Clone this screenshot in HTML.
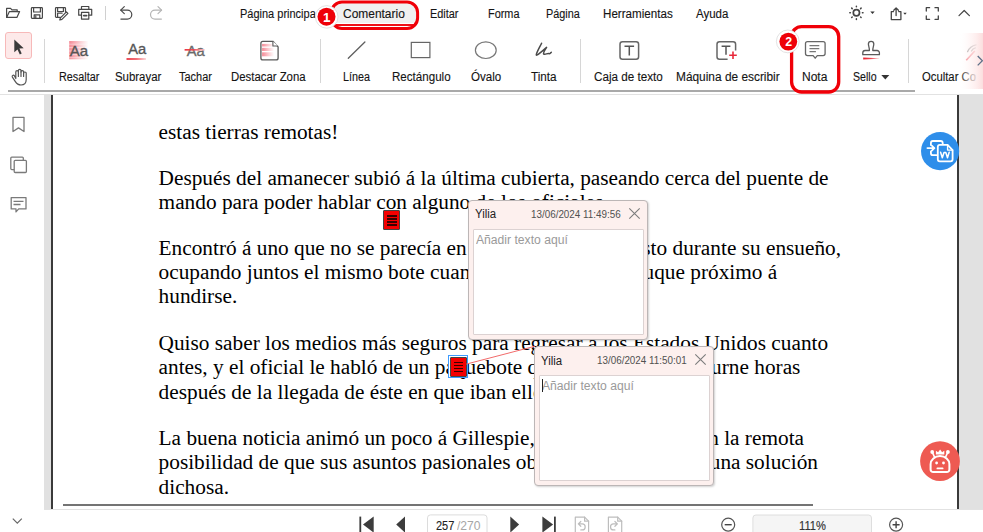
<!DOCTYPE html>
<html><head><meta charset="utf-8">
<style>
html,body{margin:0;padding:0;}
body{width:983px;height:532px;position:relative;overflow:hidden;background:#fff;font-family:"Liberation Sans",sans-serif;font-size:12px;color:#1a1a1a;}
.abs{position:absolute;}
svg{position:absolute;overflow:visible;}
.t{position:absolute;font-size:12px;line-height:14px;white-space:nowrap;color:#141414;transform-origin:0 0;-webkit-text-stroke:.12px #141414;}
.sep{position:absolute;width:1px;background:#d6d6d6;top:39px;height:44px;}
.doc{position:absolute;font-family:"Liberation Serif",serif;font-size:21.3px;color:#000;white-space:nowrap;left:158.6px;line-height:24px;}
.docr{left:auto;}
.pop{position:absolute;width:177.600px;height:137.800px;background:#fdf0ee;border:1px solid #bcb6b6;border-radius:4px;box-shadow:1px 1px 2px rgba(0,0,0,.18);}
.pop .ta{position:absolute;left:4px;top:28px;width:168.600px;height:104.200px;background:#fff;border:1px solid #dcd2d2;border-radius:1px;}
.pop .nm{position:absolute;left:5.500px;top:6.700px;font-size:12px;color:#222;transform:scaleX(.949);transform-origin:0 0;}
.pop .dt{position:absolute;top:8px;font-size:10px;color:#505050;white-space:nowrap;transform-origin:0 0;}
.pop .ph{position:absolute;left:6.600px;top:32.100px;font-size:12px;transform:scaleX(1.0117);color:#9a9a9a;white-space:nowrap;transform-origin:0 0;}
.note{position:absolute;width:15px;height:18px;background:#f40000;border:1px solid #444;border-radius:1px;}
.note i{position:absolute;left:2.800px;width:9.400px;height:1.300px;background:#3a0000;}
</style></head><body>


<div class="abs" style="left:44px;top:95px;width:7px;height:414px;background:#e1e1e1;"></div>
<div class="abs" style="left:51px;top:95px;width:2px;height:414px;background:#3a3a3a;"></div>
<div class="abs" style="left:957px;top:95px;width:2px;height:414px;background:#3a3a3a;"></div>
<div class="abs" style="left:959px;top:95px;width:24px;height:414px;background:#e1e1e1;"></div>
<div class="abs" style="left:63px;top:504px;width:750px;height:2px;background:#747474;"></div>

<div class="doc" style="top:120px;">estas tierras remotas!</div>
<div class="doc" style="top:166px;">Después del amanecer subió á la última cubierta, paseando cerca del puente de</div>
<div class="doc" style="top:190px;">mando para poder hablar con alguno de los oficiales.</div>
<div class="doc" style="top:236px;">Encontró á uno que no se parecía en nada al que había visto durante su ensueño,</div>
<div class="doc" style="top:260px;">ocupando juntos el mismo bote cuando abandonaron el buque próximo á</div>
<div class="doc" style="top:284px;">hundirse.</div>
<div class="doc" style="top:331px;">Quiso saber los medios más seguros para regresar á los Estados Unidos cuanto</div>
<div class="doc" style="top:355px;">antes, y el oficial le habló de un paquebote q</div>
<div class="doc docr" style="top:355px;right:182.6px;">nocturne horas</div>
<div class="doc" style="top:380px;">después de la llegada de éste en que iban ellos.</div>
<div class="doc" style="top:426px;">La buena noticia animó un poco á Gillespie,</div>
<div class="doc docr" style="top:426px;right:179.0px;">en la remota</div>
<div class="doc" style="top:450px;">posibilidad de que sus asuntos pasionales ob</div>
<div class="doc docr" style="top:450px;right:165.0px;">una solución</div>
<div class="doc" style="top:475px;">dichosa.</div>

<svg style="left:915px;top:126px" width="50" height="50" viewBox="915 126 50 50">
 <circle cx="940.100" cy="151.100" r="19.100" fill="#2e8eea"/>
 <g fill="none" stroke="#fff" stroke-width="1.800" stroke-linejoin="round" stroke-linecap="round">
  <path d="M930.900 145v-2a2 2 0 0 1 2-2h7.800a2 2 0 0 1 2 2v1"/>
  <path d="M930.900 151.300v1.900a2 2 0 0 0 2 2h3.500"/>
  <path d="M927.400 148.100h6.800M931.800 145.600l2.600 2.500l-2.600 2.500"/>
  <path d="M939.800 144.900h7.800l5 5.200v9.200a2 2 0 0 1-2 2h-10.800a2 2 0 0 1-2-2v-12.400a2 2 0 0 1 2-2z" fill="#2e8eea"/>
  <path d="M947.600 144.900v5.200h5" stroke-width="1.400"/>
 </g>
 <path d="M940.600 152.200l1.700 5.600l1.700-5.200h1.800l1.700 5.200l1.700-5.600" fill="none" stroke="#fff" stroke-width="1.500" stroke-linejoin="round" stroke-linecap="round"/>
</svg>
<svg style="left:915px;top:436px" width="50" height="50" viewBox="915 436 50 50">
 <circle cx="940" cy="461.050" r="19.900" fill="#ee5a52"/>
 <g fill="none" stroke="#fff" stroke-width="2" stroke-linejoin="round" stroke-linecap="round">
  <path d="M930.600 469.500v-5.200a9.400 8.200 0 0 1 18.800 0v5.200a2.600 2.600 0 0 1-2.600 2.600h-13.600a2.600 2.600 0 0 1-2.600-2.600z"/>
  <path d="M932.500 452.600l1.800 4M947.600 452.600l-1.800 4" stroke-width="1.600"/>
  <path d="M937.400 468.400h5.200" stroke-width="1.800"/>
 </g>
 <circle cx="932.200" cy="452" r="1.900" fill="#fff"/><circle cx="947.900" cy="452" r="1.900" fill="#fff"/>
 <circle cx="936.600" cy="463" r="1.400" fill="#fff"/><circle cx="943.500" cy="463" r="1.400" fill="#fff"/>
 <path d="M935.900 454.400v-3.600l2.200 1.400l2-2.600l2 2.600l2.200-1.400v3.600z" fill="#fff"/>
</svg>


<div class="abs" style="left:0;top:95px;width:44px;height:437px;background:#fff;"></div>
<svg style="left:0;top:95px" width="44" height="140" viewBox="0 95 44 140" fill="none" stroke="#7a7a7a" stroke-width="1.300" stroke-linejoin="round">
 <path d="M13 117.300h11v14.200l-5.500-3.600l-5.500 3.600z"/>
 <path d="M14.200 169.600h-2.400a1 1 0 0 1-1-1v-10.500a1 1 0 0 1 1-1h10.500a1 1 0 0 1 1 1v2.200"/>
 <rect x="14.200" y="160.300" width="12.200" height="12.200" rx="1"/>
 <path d="M11.200 197.600h14.800v11.300h-7.300l-2.700 3l0-3h-4.800z"/>
 <path d="M13.500 201.300h10M13.500 204.500h7"/>
</svg>


<div class="abs" style="left:0;top:0;width:983px;height:94px;background:#fff;"></div>
<div class="abs" style="left:8px;top:90px;width:907px;height:2px;background:#a9a9a9;"></div>
<div class="abs" style="left:0;top:94px;width:983px;height:1px;background:#e2e2e2;"></div>

<div class="abs" style="left:333px;top:3px;width:83px;height:20px;background:#f0f0f0;border-radius:8px 8px 3px 3px;"></div>
<div class="abs" style="left:335.500px;top:24.400px;width:78.200px;height:1.500px;background:#ee1018;"></div>
<div class="t" style="left:239.7px;top:7px;transform:scaleX(0.9162);">Página principa</div>
<div class="t" style="left:343.2px;top:7px;transform:scaleX(0.9963);">Comentario</div>
<div class="t" style="left:429.6px;top:7px;transform:scaleX(0.9088);">Editar</div>
<div class="t" style="left:487.9px;top:7px;transform:scaleX(0.9086);">Forma</div>
<div class="t" style="left:545.5px;top:7px;transform:scaleX(0.9042);">Página</div>
<div class="t" style="left:602.7px;top:7px;transform:scaleX(0.9677);">Herramientas</div>
<div class="t" style="left:695.8px;top:7px;transform:scaleX(0.9583);">Ayuda</div>
<div class="t" style="left:59.2px;top:70px;transform:scaleX(0.9018);">Resaltar</div>
<div class="t" style="left:114.5px;top:70px;transform:scaleX(0.9507);">Subrayar</div>
<div class="t" style="left:179.1px;top:70px;transform:scaleX(0.9131);">Tachar</div>
<div class="t" style="left:231.4px;top:70px;transform:scaleX(0.9479);">Destacar Zona</div>
<div class="t" style="left:343px;top:70px;transform:scaleX(0.8991);">Línea</div>
<div class="t" style="left:391.9px;top:70px;transform:scaleX(0.9651);">Rectángulo</div>
<div class="t" style="left:470.7px;top:70px;transform:scaleX(0.9630);">Óvalo</div>
<div class="t" style="left:531.1px;top:70px;transform:scaleX(0.9760);">Tinta</div>
<div class="t" style="left:594.2px;top:70px;transform:scaleX(0.9729);">Caja de texto</div>
<div class="t" style="left:676px;top:70px;transform:scaleX(0.9903);">Máquina de escribir</div>
<div class="t" style="left:802px;top:70px;transform:scaleX(1.0016);">Nota</div>
<div class="t" style="left:853.4px;top:70px;transform:scaleX(0.8842);">Sello</div>
<div class="t" style="left:921.9px;top:70px;transform:scaleX(.9414)">Ocultar Co</div>
<svg style="left:881px;top:75px" width="9" height="5"><path d="M0.3 0h8L4.300 4.600z" fill="#333"/></svg>
<div class="sep" style="left:44px;"></div>
<div class="sep" style="left:320px;"></div>
<div class="sep" style="left:580px;"></div>
<div class="sep" style="left:908px;"></div>
<div class="abs" style="left:105px;top:6px;width:1px;height:14px;background:#d0d0d0;"></div>

<svg style="left:0;top:0" width="170" height="30" viewBox="0 0 170 30" fill="none" stroke="#484848" stroke-width="1.200" stroke-linejoin="round" stroke-linecap="round">
 <!-- folder -->
 <path d="M6.600 17.400v-9h4l1.300 1.400h5.300v1.800"/><path d="M6.600 17.400l2.800-5.800h10.200l-2.700 5.800z"/>
 <!-- save -->
 <rect x="31.400" y="7.600" width="11" height="10.800" rx=".8"/><path d="M33.600 7.600v4.400h6.800v-4.400M34.200 18.400v-3.600h5.600v3.600M35.800 16.200v2"/>
 <!-- save edit -->
 <path d="M60.500 17.300h-4.200a.8.800 0 0 1-.8-.8v-8.100a.8.800 0 0 1 .8-.8h8.400a.8.800 0 0 1 .8.800v3.600"/><path d="M57.600 7.600v3.900h5.800v-3.900M57.600 17.300v-4.200h4.600"/>
 <path d="M66.400 11.900l1.500 1.500l-6 6l-2.100.6l.6-2.100z"/>
 <!-- print -->
 <path d="M81.500 9.300v-2.800h7.300v2.800"/><path d="M81.500 15.200h-2.800v-5.900h13v5.900h-2.900"/><rect x="81.500" y="12.300" width="7.300" height="6.800"/><path d="M83.800 15.600h2.800" stroke-width="1.800"/>
 <!-- undo -->
 <path d="M124.300 6.600l-3.600 3.500l3.600 3.500"/><path d="M120.900 10.100h6.400a4.500 4.500 0 0 1 0 9h-6.400"/>
 <g stroke="#b4b4b4"><path d="M158 6.600l3.600 3.500l-3.600 3.500"/><path d="M161.400 10.100h-6.400a4.500 4.500 0 0 0 0 9h6.400"/></g>
</svg>


<svg style="left:840px;top:0" width="143" height="30" viewBox="840 0 143 30" fill="none" stroke="#444" stroke-width="1.300" stroke-linecap="round" stroke-linejoin="round">
 <circle cx="856.400" cy="12.800" r="3.100" stroke-width="1.700"/>
 <g stroke-width="1.500"><path d="M856.400 6.200v.6M856.400 18.800v.6M849.800 12.800h.6M862.400 12.800h.6M851.700 8.100l.5.500M860.600 17l.5.500M851.700 17.500l.5-.5M860.600 8.600l.5-.5"/></g>
 <path d="M870.300 11.600h4.400l-2.200 2.500z" fill="#333" stroke="none"/>
 <path d="M893.500 11.600h-2.200v8h9.600v-8h-2.200M896.100 15.500v-7.200M893.800 10.300l2.300-2.400l2.300 2.400"/>
 <path d="M903.300 12.800h3.400l-1.700 1.900z" fill="#333" stroke="none"/>
 <path d="M926.300 11v-3.300h3.300M935 7.700h3.300v3.300M938.300 16v3.300h-3.300M929.600 19.300h-3.300v-3.300"/>
 <path d="M959 15.700l5.200-5.200l5.200 5.200" stroke-width="1.200"/>
</svg>


<div class="abs" style="left:5.2px;top:32.3px;width:24.6px;height:24.6px;background:#fde9e9;border:1px solid #f7b9b9;border-radius:3px;"></div>
<svg style="left:0;top:30px" width="44" height="60" viewBox="0 30 44 60">
 <path d="M14.300 39.500v12.800l3.200-2.900l2.300 5l1.900-.9l-2.300-4.900l4.300-.3z" fill="#3a3a3a"/>
 <g fill="none" stroke="#555" stroke-width="1.200" stroke-linejoin="round" stroke-linecap="round">
  <path d="M15.800 78.500v-6.600a1.300 1.300 0 0 1 2.600 0v-1.300a1.300 1.300 0 0 1 2.600 0v1.300a1.300 1.300 0 0 1 2.600 0v1.400a1.300 1.300 0 0 1 2.600 0v6.200c0 3.300-2 5.500-5.200 5.500c-3 0-4.300-1.200-5.800-3.600l-2.800-4.300c-.8-1.400 1-2.500 2-1.400z"/>
  <path d="M18.400 71.900v4.600M21 71.900v4.600M23.600 73.300v3.200"/>
 </g>
</svg>


<svg style="left:44px;top:30px" width="939" height="60" viewBox="44 30 939 60">
 <defs>
  <linearGradient id="pk" x1="0" x2="1" y1="0" y2="0"><stop offset="0" stop-color="#f58a96"/><stop offset=".55" stop-color="#fbcdd2"/><stop offset="1" stop-color="#fff"/></linearGradient>
  <linearGradient id="rd" x1="0" x2="1" y1="0" y2="0"><stop offset="0" stop-color="#e8202c"/><stop offset=".5" stop-color="#ee4a55"/><stop offset="1" stop-color="#fbd0d3"/></linearGradient>
  <linearGradient id="fade" x1="0" x2="1" y1="0" y2="0"><stop offset="0" stop-color="#fff" stop-opacity="0"/><stop offset=".4" stop-color="#fff4f4" stop-opacity=".6"/><stop offset=".75" stop-color="#fdeaea" stop-opacity=".9"/><stop offset="1" stop-color="#fbdede"/></linearGradient>
 </defs>
 <!-- Resaltar -->
 <rect x="69.200" y="41" width="19.300" height="18.300" fill="url(#pk)"/>
 <g stroke="#fff" stroke-opacity=".55" stroke-width=".8"><path d="M69 44.200h20M69 47.600h20M69 51h20M69 54.400h20M69 57.700h20"/></g>
 <text x="69.800" y="55.600" font-family="Liberation Sans" font-size="15.2" fill="#565656" stroke="#565656" stroke-width=".35" textLength="18.400" lengthAdjust="spacingAndGlyphs">Aa</text>
 <!-- Subrayar -->
 <text x="128.200" y="53.800" font-family="Liberation Sans" font-size="15.2" fill="#565656" stroke="#565656" stroke-width=".35" textLength="18" lengthAdjust="spacingAndGlyphs">Aa</text>
 <rect x="126.500" y="58.200" width="19.500" height="1.600" fill="url(#rd)"/>
 <!-- Tachar -->
 <text x="186.800" y="55.600" font-family="Liberation Sans" font-size="15.2" fill="#6a6a6a" stroke="#6a6a6a" stroke-width=".35" textLength="18" lengthAdjust="spacingAndGlyphs">Aa</text>
 <rect x="184.600" y="49.100" width="20.200" height="1.500" fill="url(#rd)"/>
 <!-- Destacar zona -->
 <rect x="262.100" y="43.900" width="12" height="2.600" fill="url(#pk)"/>
 <rect x="262.100" y="47.800" width="12" height="3.200" fill="url(#pk)"/>
 <rect x="262.100" y="52.300" width="12" height="4" fill="url(#pk)"/>
 <path d="M272.900 41.300h-10a2 2 0 0 0-2 2v14.600a2 2 0 0 0 2 2h13.200a2 2 0 0 0 2-2v-11z" fill="none" stroke="#5a5a5a" stroke-width="1.300" stroke-linejoin="round"/>
 <path d="M272.900 41.300v4.700h5.200" fill="#fff" stroke="#5a5a5a" stroke-width="1.100" stroke-linejoin="round"/>
 <!-- Linea -->
 <path d="M348.300 58.300l16.600-16.300" stroke="#5f5f5f" stroke-width="1.300" stroke-linecap="round"/>
 <!-- Rect -->
 <rect x="411.300" y="42.400" width="18.600" height="15.200" fill="none" stroke="#666" stroke-width="1.200"/>
 <!-- Oval -->
 <ellipse cx="485.800" cy="50.200" rx="10.400" ry="8.300" fill="none" stroke="#777" stroke-width="1.200"/>
 <!-- Tinta -->
 <path d="M541.600 43.200C539.800 47 536.500 52.500 536.300 54.800C536.200 56.500 541 52 546.600 47.400C545 50 542.500 53.500 544 54.200C545.500 54.900 547.500 53 549 53.600C549.600 54 550.500 53 551.300 52.300" fill="none" stroke="#4a4a4a" stroke-width="1.500" stroke-linecap="round" stroke-linejoin="round"/>
 <!-- Caja de texto -->
 <rect x="620" y="41.700" width="18.600" height="17.500" rx="2.500" fill="none" stroke="#666" stroke-width="1.500"/>
 <path d="M624.500 46.300h9.600M629.300 46.300v9.200" stroke="#555" stroke-width="1.500" fill="none"/>
 <!-- Maquina -->
 <path d="M727.600 59.200h-8.100a2.500 2.500 0 0 1-2.500-2.500v-12.500a2.500 2.500 0 0 1 2.500-2.500h13.600a2.500 2.500 0 0 1 2.500 2.500v6.300" fill="none" stroke="#666" stroke-width="1.500"/>
 <path d="M721.600 46.300h8.800M726 46.300v8.400" stroke="#555" stroke-width="1.500" fill="none"/>
 <path d="M729.200 55.200h7.600M733 51.400v7.600" stroke="#e8283a" stroke-width="1.600" fill="none"/>
 <!-- Nota -->
 <path d="M807.500 41.600h15.600a2 2 0 0 1 2 2v10a2 2 0 0 1-2 2h-5.800l-2.100 2.600l-2.100-2.600h-5.600a2 2 0 0 1-2-2v-10a2 2 0 0 1 2-2z" fill="none" stroke="#666" stroke-width="1.300" stroke-linejoin="round"/>
 <path d="M809.500 45.700h9.800M809.500 48.700h9.800M809.500 51.700h6.400" stroke="#777" stroke-width="1.200"/>
 <!-- Sello -->
 <path d="M871.100 41.400a2.700 2.700 0 0 1 2.700 2.700c0 1.800-1 3.200-1 6.400h4.300a2.300 2.300 0 0 1 2.300 2.300v1.900h-16.600v-1.900a2.300 2.300 0 0 1 2.300-2.300h4.300c0-3.200-1-4.600-1-6.400a2.700 2.700 0 0 1 2.700-2.700z" fill="none" stroke="#5a5a5a" stroke-width="1.300" stroke-linejoin="round"/>
 <path d="M863.200 57.600l16 .7v.4l-16 .8z" fill="url(#rd)"/>
 <!-- Ocultar icon (faded) -->
 <g fill="none" stroke="#8a8a8a" stroke-width="1.300" stroke-linecap="round"><path d="M967.600 51.700c1.500-3.500 4.500-6 8.500-6.800"/><path d="M971.500 51c.8-1.800 2.200-2.800 4-3.200"/></g>
 <path d="M966.300 60.200l8.500-9.200" stroke="#f0606c" stroke-width="1.600"/>
 <rect x="959" y="33" width="24" height="56" fill="url(#fade)"/>
 <path d="M977.700 56l4.700 4.700l-4.700 4.700" fill="none" stroke="#5c7088" stroke-width="1.300"/>
</svg>


<svg style="left:0;top:0" width="983" height="100" viewBox="0 0 983 100">
 <rect x="331.5" y="2" width="86.100" height="26.400" rx="10.500" fill="none" stroke="#f00008" stroke-width="3"/>
 <circle cx="326.700" cy="16.900" r="11.300" fill="#fff" stroke="#dadada" stroke-width=".8"/>
 <circle cx="326.500" cy="16.700" r="9" fill="#ee0008"/>
 <text x="326.500" y="21.500" font-family="Liberation Sans" font-weight="bold" font-size="13" fill="#fff" text-anchor="middle">1</text>
 <rect x="324" y="20.300" width="6.200" height="1.400" fill="#fff"/>
 <rect x="791.600" y="26.600" width="47.100" height="65.400" rx="10" fill="none" stroke="#f00008" stroke-width="3.300"/>
 <circle cx="787.800" cy="41.400" r="11.400" fill="#fff" stroke="#dadada" stroke-width=".8"/>
 <circle cx="788.300" cy="41.600" r="8.900" fill="#ee0008"/>
 <text x="788.700" y="45.900" font-family="Liberation Sans" font-weight="bold" font-size="12.400" fill="#fff" text-anchor="middle">2</text>
</svg>

<div class="note" style="left:383.4px;top:210.3px;"><i style="top:4px"></i><i style="top:7px"></i><i style="top:10px"></i><i style="top:13px"></i></div>
<div class="abs" style="left:448.200px;top:355.400px;width:17.600px;height:20.600px;border:1px solid #3d9bff;background:#fff;"></div>
<div class="note" style="left:450.1px;top:357px;"><i style="top:4px"></i><i style="top:7px"></i><i style="top:10px"></i><i style="top:13px"></i></div>
<svg style="left:460px;top:340px" width="80" height="30" viewBox="460 340 80 30"><path d="M466.300 364.100L535 346.200" stroke="#f26b6b" stroke-width="1"/></svg>
<div class="pop" style="left:468.2px;top:199.8px;"><div class="nm">Yilia</div><div class="dt" style="left:61.6px;transform:scaleX(.985)">13/06/2024 11:49:56</div><svg style="left:160px;top:7px" width="11" height="11"><path d="M.3.300l10.400 10.400M10.700.3L.3 10.700" stroke="#7c7c7c" stroke-width="1.100"/></svg><div class="ta"></div><div class="ph">Añadir texto aquí</div></div>
<div class="pop" style="left:534.4px;top:345.9px;"><div class="nm">Yilia</div><div class="dt" style="left:61.2px;transform:scaleX(.985)">13/06/2024 11:50:01</div><svg style="left:160px;top:7px" width="11" height="11"><path d="M.3.300l10.400 10.400M10.700.3L.3 10.700" stroke="#7c7c7c" stroke-width="1.100"/></svg><div class="ta"></div><div class="ph">Añadir texto aquí</div><div class="abs" style="left:7px;top:32.500px;width:1px;height:13px;background:#222;"></div></div>

<div class="abs" style="left:44px;top:509px;width:939px;height:23px;background:#fff;"></div>
<div class="abs" style="left:44px;top:509px;width:939px;height:1px;background:#e2e2e2;"></div>
<svg style="left:0;top:509px" width="983" height="23" viewBox="0 509 983 23">
 <path d="M12.800 518.600l4.500 4.500l4.500-4.500" fill="none" stroke="#666" stroke-width="1.200"/>
 <g fill="#3c3c3c">
  <rect x="359.400" y="516.600" width="1.800" height="16"/><path d="M373.700 516.600v16l-10.700-8z"/>
  <path d="M405 516.600v16l-8.800-8z"/>
  <path d="M510.300 516.600v16l8.800-8z"/>
  <path d="M542.400 516.600v16l10.700-8z"/><rect x="554" y="516.600" width="1.800" height="16"/>
 </g>
 <rect x="427.500" y="514.900" width="59.500" height="24" rx="3" fill="#fff" stroke="#dcdcdc"/>
 <g fill="none" stroke="#bdbdbd" stroke-width="1.200" stroke-linejoin="round" stroke-linecap="round">
  <path d="M575.300 533v-15.800h9.300l4 4v11.800"/><path d="M584.600 517.200v4h4"/>
  <path d="M580.800 521.500l-2.500 2.400l2.500 2.400M578.500 523.900h3.700a3 3 0 0 1 0 6h-1.400"/>
  <path d="M608.400 533v-15.800h9.300l4 4v11.800"/><path d="M617.700 517.200v4h4"/>
  <path d="M614.900 521.500l2.500 2.400l-2.500 2.400M617.200 523.900h-3.700a3 3 0 0 0 0 6h1.400"/>
 </g>
 <circle cx="728.200" cy="524.700" r="6.500" fill="none" stroke="#555" stroke-width="1.200"/><path d="M724.700 524.700h7" stroke="#444" stroke-width="1.400"/>
 <rect x="752.900" y="515" width="118.600" height="24" rx="3" fill="#f5f5f5" stroke="#dedede"/>
 <circle cx="896.100" cy="524.700" r="6.500" fill="none" stroke="#555" stroke-width="1.200"/><path d="M892.600 524.700h7M896.100 521.200v7" stroke="#444" stroke-width="1.400"/>
</svg>
<div class="t" style="left:436.200px;top:518.500px;color:#222;transform:scaleX(.915)">257</div>
<div class="t" style="left:457.300px;top:518.500px;color:#a6a6a6;-webkit-text-stroke:0;transform:scaleX(1.010)">/270</div>
<div class="t" style="left:798.800px;top:518.500px;color:#333;transform:scaleX(.93)">111%</div>

</body></html>
